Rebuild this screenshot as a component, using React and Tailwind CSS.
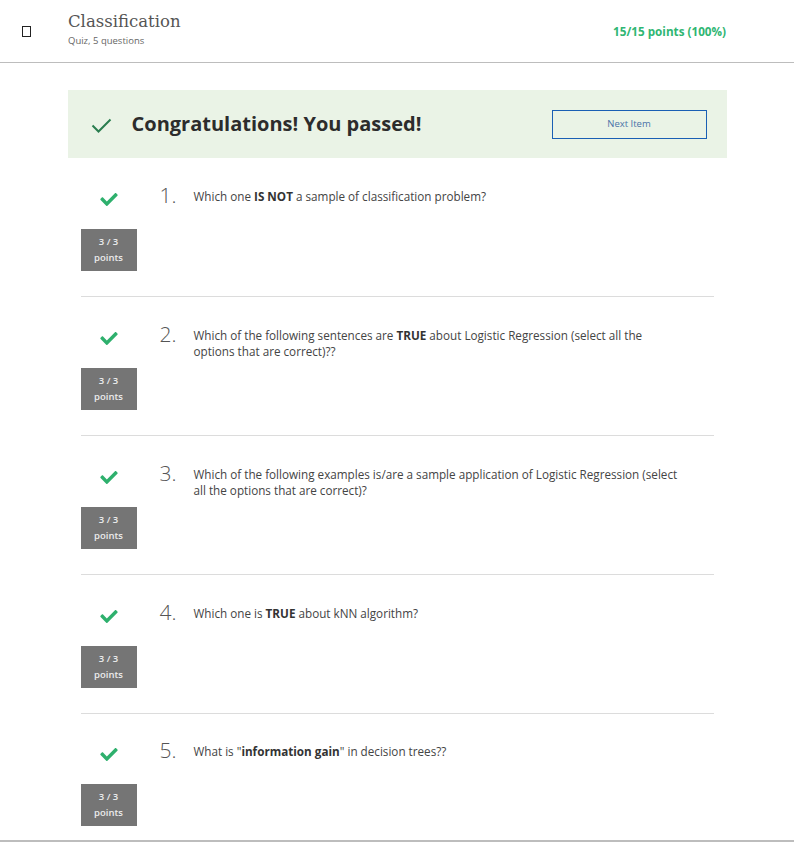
import React from "react";

const GreenCheck = () => (
  <svg width="18" height="13" viewBox="0 64 512 384" className="block">
    <path
      fill="#2eb06d"
      d="M173.898 439.404l-166.4-166.4c-9.997-9.997-9.997-26.206 0-36.204l36.203-36.204c9.997-9.998 26.207-9.998 36.204 0L192 312.69 432.095 72.596c9.997-9.997 26.207-9.997 36.204 0l36.203 36.204c9.997 9.997 9.997 26.206 0 36.204l-294.4 294.401c-9.998 9.997-26.207 9.997-36.204-.001z"
    />
  </svg>
);

const questions = [
  { n: "1.", text: <>Which one <b className="font-bold text-[#333]">IS NOT</b> a sample of classification problem?</> },
  { n: "2.", text: <>Which of the following sentences are <b className="font-bold text-[#333]">TRUE</b> about Logistic Regression (select all the options that are correct)??</> },
  { n: "3.", text: <>Which of the following examples is/are a sample application of Logistic Regression (select all the options that are correct)?</> },
  { n: "4.", text: <>Which one is <b className="font-bold text-[#333]">TRUE</b> about kNN algorithm?</> },
  { n: "5.", text: <>What is "<b className="font-bold text-[#333]">information gain</b>" in decision trees??</> },
];

export default function App() {
  return (
    <div className="w-[794px] min-h-[855px] bg-white font-['Open_Sans',sans-serif] text-[#333]">
      {/* Header */}
      <div className="h-[63px] border-b border-[#bdbdbd] flex items-start pl-[22px] pr-[68px]">
        <div className="mt-[26px] w-[9px] h-[11px] border border-[#222]" />
        <div className="ml-[37px] mt-[11px] flex flex-col">
          <div className="font-['DejaVu_Serif',serif] text-[16.5px] leading-[22px] text-[#555]">Classification</div>
          <div className="text-[9.5px] leading-[13px] mt-[1px] text-[#666]">Quiz, 5 questions</div>
        </div>
        <div className="ml-auto mt-[23px] text-[11.7px] leading-[16px] font-bold text-[#2fb673]">15/15 points (100%)</div>
      </div>

      {/* Content */}
      <div className="w-[659px] mx-auto mt-[27px]">
        <div className="h-[68px] bg-[#eaf3e6] flex items-center pl-[23px] pr-[20px]">
          <svg width="21" height="15" viewBox="0 0 21 15" className="mt-[3px]">
            <polyline points="1.5,7.5 7.5,13.5 19.5,1.5" fill="none" stroke="#2a7d4f" strokeWidth="2" />
          </svg>
          <div className="ml-[20px] text-[20px] leading-[28px] font-bold text-[#2c2c2c]">Congratulations! You passed!</div>
          <div className="ml-auto w-[155px] h-[29px] border-[1.5px] border-[#1a5fb4] flex items-center justify-center text-[9.5px] text-[#4a72a8]">
            Next Item
          </div>
        </div>

        <div className="px-[13px]">
          {questions.map((q, i) => (
            <div
              key={i}
              className={
                i < questions.length - 1
                  ? "flex pt-[35px] pb-[25px] border-b border-[#dcdcdc]"
                  : "flex pt-[34px] pb-[14px]"
              }
            >
              <div className="w-[56px] flex flex-col items-center">
                <GreenCheck />
                <div className="mt-[23px] w-[56px] h-[42px] bg-[#757575] flex flex-col items-center justify-center text-[9.5px] leading-[16px] font-semibold text-[#ececec]">
                  <div>3 / 3</div>
                  <div>points</div>
                </div>
              </div>
              <div className="ml-[23px] -mt-[8px] flex items-start">
                <div className="w-[34px] text-[21px] leading-none font-light text-[#555]">{q.n}</div>
                <div className="mt-[3px] w-[490px] text-[11.7px] leading-[16px] text-[#444]">{q.text}</div>
              </div>
            </div>
          ))}
        </div>
      </div>
      <div className="border-t-2 border-[#bdbdbd] h-[12px]" />
    </div>
  );
}
